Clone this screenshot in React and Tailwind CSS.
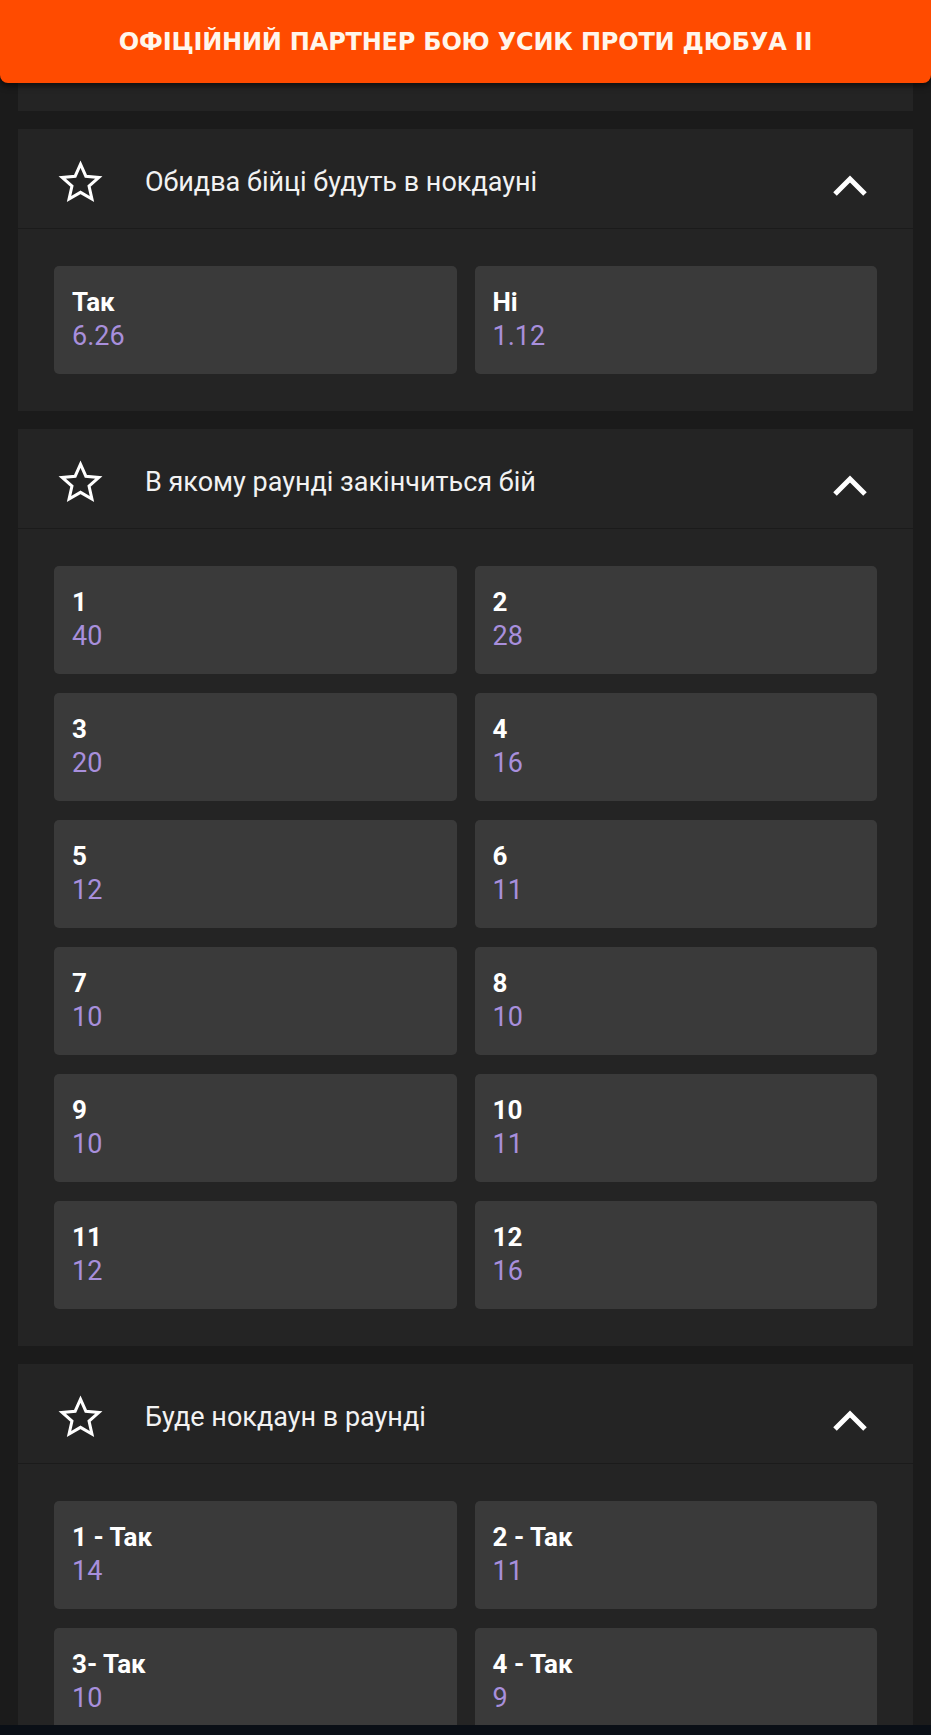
import React from "react";

const markets = [
  {
    title: "Обидва бійці будуть в нокдауні",
    options: [
      { label: "Так", odds: "6.26" },
      { label: "Ні", odds: "1.12" },
    ],
  },
  {
    title: "В якому раунді закінчиться бій",
    options: [
      { label: "1", odds: "40" },
      { label: "2", odds: "28" },
      { label: "3", odds: "20" },
      { label: "4", odds: "16" },
      { label: "5", odds: "12" },
      { label: "6", odds: "11" },
      { label: "7", odds: "10" },
      { label: "8", odds: "10" },
      { label: "9", odds: "10" },
      { label: "10", odds: "11" },
      { label: "11", odds: "12" },
      { label: "12", odds: "16" },
    ],
  },
  {
    title: "Буде нокдаун в раунді",
    options: [
      { label: "1 - Так", odds: "14" },
      { label: "2 - Так", odds: "11" },
      { label: "3- Так", odds: "10" },
      { label: "4 - Так", odds: "9" },
    ],
  },
];

const StarIcon = () => (
  <svg viewBox="0 0 24 24" className="h-[45px] w-[45px] shrink-0" fill="none">
    <polygon
      points="12,2.2 14.85,8.65 21.8,9.3 16.55,13.95 18.1,20.8 12,17.25 5.9,20.8 7.45,13.95 2.2,9.3 9.15,8.65"
      stroke="white"
      strokeWidth="1.6"
      strokeLinejoin="miter"
    />
  </svg>
);

const ChevronUp = () => (
  <svg viewBox="0 0 36 26" className="mt-[7px] h-[26px] w-[36px] shrink-0" fill="none">
    <polyline
      points="3,21 18,6 33,21"
      stroke="white"
      strokeWidth="5"
      strokeLinecap="butt"
      strokeLinejoin="miter"
    />
  </svg>
);

const OddsButton = ({ label, odds }) => (
  <button className="flex h-[108px] flex-col items-start rounded-[5px] bg-[#3a3a3a] pl-[18px] pt-[19px] text-left">
    <span className="text-[26px] font-bold leading-[35px] text-white">{label}</span>
    <span className="text-[27px] leading-[33px] text-[#a88fdc]">{odds}</span>
  </button>
);

const Market = ({ title, options }) => (
  <section className="bg-[#242424]">
    <div className="flex h-[100px] items-center border-b border-[#1b1b1b] pl-[40px] pr-[45px] pt-[7px]">
      <StarIcon />
      <span className="ml-[42px] flex-1 text-[27px] text-[#f2f2f2]">{title}</span>
      <ChevronUp />
    </div>
    <div className="grid grid-cols-2 gap-x-[18px] gap-y-[19px] px-[36px] pt-[37px] pb-[37px]">
      {options.map((o, i) => (
        <OddsButton key={i} label={o.label} odds={o.odds} />
      ))}
    </div>
  </section>
);

export default function App() {
  return (
    <div
      className="h-screen overflow-hidden bg-[#1b1b1b]"
      style={{ fontFamily: "Roboto, 'Noto Sans', sans-serif" }}
    >
      <header className="relative z-10 flex h-[83px] items-center justify-center rounded-b-[8px] bg-[#ff4b00] shadow-[0_3px_6px_rgba(0,0,0,0.6)]">
        <h1
          className="text-[24px] font-bold uppercase tracking-[-0.2px] text-[#fff6ec]"
          style={{ fontFamily: "'DejaVu Sans', sans-serif" }}
        >
          Офіційний партнер бою Усик проти Дюбуа II
        </h1>
      </header>

      <div className="flex flex-col gap-[18px] px-[18px]">
        <div className="h-[28px] bg-[#242424]"></div>
        {markets.map((m, i) => (
          <Market key={i} title={m.title} options={m.options} />
        ))}
      </div>

      <div className="fixed inset-x-0 bottom-0 h-[10px] bg-[#0a0f16]"></div>
    </div>
  );
}
